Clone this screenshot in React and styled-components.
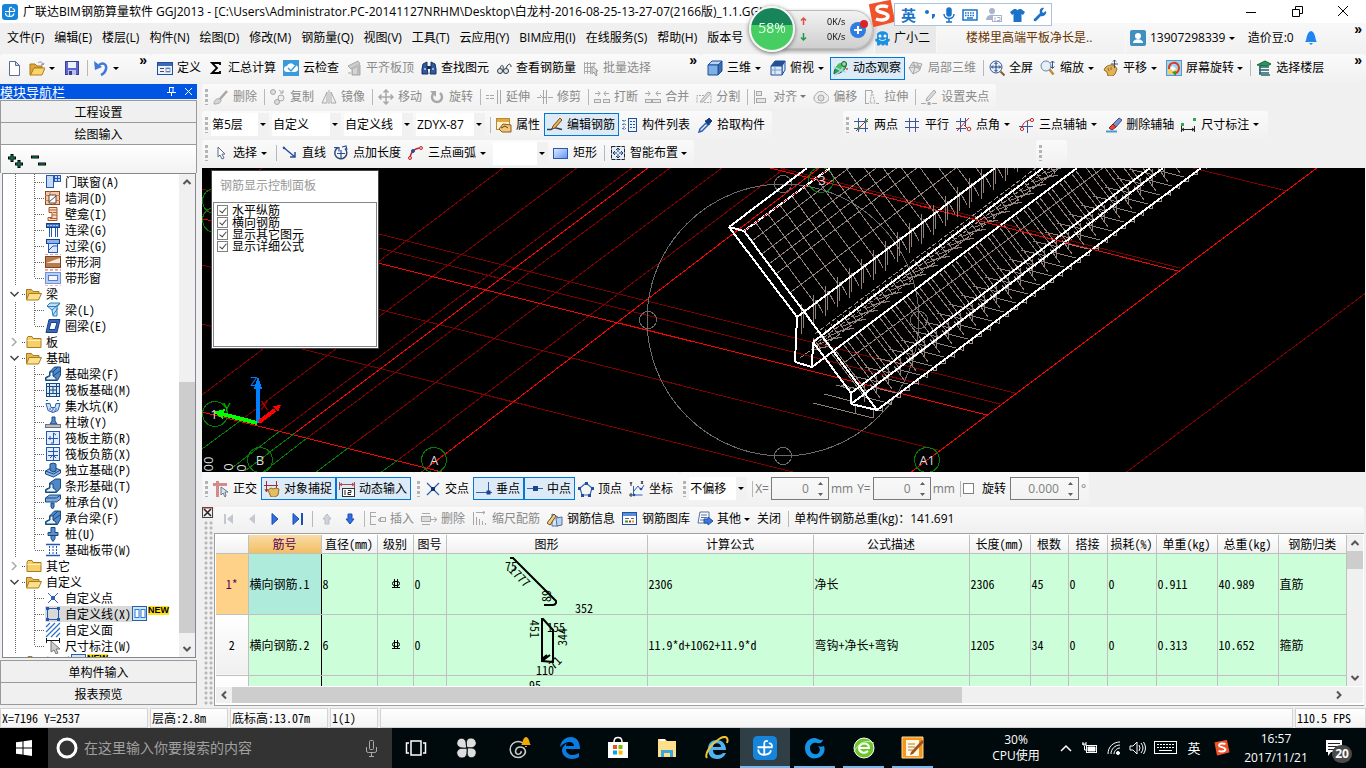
import React from "react";
import styled, { createGlobalStyle, css } from "styled-components";

const UI = `"Open Sans", "Noto Sans CJK SC", sans-serif`;
const SONG = `"Noto Sans CJK SC", sans-serif`;

const Global = createGlobalStyle`
  *, *::before, *::after { box-sizing: border-box; }
  body { margin: 0; background: #f0f0f0; }
  button, input, select { font: inherit; color: inherit; margin: 0; }
  button { background: none; border: 0; padding: 0; }
  svg { display: block; flex: none; }
`;

/* ------------------------------------------------------------------ icons */

const B = "#1f4f9e";
const G = "#a8a8a8";
const R = "#c0282d";

const line = (d, stroke = B, w = 1, extra = {}) => (
  <path d={d} fill="none" stroke={stroke} strokeWidth={w} {...extra} />
);
const area = (d, fill, stroke) => <path d={d} fill={fill} stroke={stroke || "none"} />;
const box = (x, y, w, h, fill = "none", stroke = "none") => (
  <rect x={x} y={y} width={w} height={h} fill={fill} stroke={stroke} />
);
const dot = (cx, cy, r, fill = "none", stroke = "none") => (
  <circle cx={cx} cy={cy} r={r} fill={fill} stroke={stroke} />
);

const ART = {
  newFile: <>{area("M3.5 1.5h6l4 4v10h-10z", "#fff", "#5a6f96")}{area("M9.5 1.5v4h4z", "#c9d6ee", "#5a6f96")}</>,
  open: <>{area("M1 4h5l2 2h5v2H5l-3 7H1z", "#e0a83a", "#a87619")}{area("M5 8h11l-3 7H1.5z", "#fbd46c", "#b27f1c")}{line("M9 3c2-2 5-1 5 2M12 4l2 1 1-2", "#7d8fa8")}</>,
  save: <>{box(1.5, 1.5, 13, 13, "#5b67c9", "#3a3f96")}{box(4, 2, 8, 6, "#eef1fb")}{box(4, 10, 8, 5, "#b9c0ea")}{box(5, 11, 3, 4, "#3a3f96")}</>,
  undo: <>{line("M6 5c4-3 8-1 7 4-.6 3-3 5-5 6", "#3f78d8", 2.5)}{area("M1 1l1 9 7-3z", "#3f78d8")}</>,
  define: <>{box(0.5, 2.5, 15, 12, "#eef3fb", B)}{box(1, 3, 14, 3, "#3c6ab5")}{line("M3 8.500h4M3 11.500h4M9 8.500h4M9 11.500h4", "#3c4c6b")}{box(9, 8, 4, 4, "none", "#7f9ccc")}</>,
  sigma: <path d="M12 5V3H4l5 5-5 5h8v-2" fill="none" stroke="#000" strokeWidth="1.800" />,
  cloud: <>{box(0, 0, 16, 16, "#3a9bdc")}{area("M4 12a3 3 0 0 1 0-6 4 4 0 0 1 7-1 3.500 3.500 0 0 1 1 7z", "#fff")}{line("M5 8l3 3 5-6", "#3a9bdc", 1.5)}</>,
  slabTop: <>{area("M2 6l10-5 2 3-9 5z", "#ccc", G)}{area("M6 8v7h8V5M2 13h3", "#bbb", G)}{line("M8 9v5M10 8v6", "#eee")}</>,
  binocular: <>{area("M2 4l4-2v6l1 6H1v-5zM14 4l-4-2v6l-1 6h6v-5z", "#2e5a9f", "#16305e")}{box(6, 6, 4, 3, "#16305e")}{line("M3 9h2M11 9h2", "#bcd0f0", 1.5)}</>,
  glasses: <>{dot(4, 11, 2.5, "#dfe7ee", "#2b3640")}{dot(10, 11, 2.5, "#dfe7ee", "#2b3640")}{line("M4 8c2-5 4-2 3 2M10 8c3-6 5-4 5-1", "#2b3640")}</>,
  batch: <>{line("M1.500 2v12M4.500 2v12M7.500 2v12M1 3.500h12M1 7.500h9M1 11.500h7M11 2v5", G)}{area("M9 6v8l2-2 2 4 1-1-1-4h2z", "#ddd", "#999")}</>,
  cube: <>{area("M1 5l4-4h10l-4 4z", "#b9d5f3", B)}{area("M11 5l4-4v10l-4 4z", "#3f6da8", B)}{area("M1 5h10v10H1z", "#7fb0e2", B)}</>,
  cubeTop: <>{area("M1 6l4-5h10l-3 5z", "#24508f", B)}{area("M12 6l3-5v9l-3 5z", "#dbe9f8", B)}{area("M1 6h11v9H1z", "#dbe9f8", B)}{line("M5 6v9M1 10h11", "#7fa0cc")}</>,
  orbit: <>{area("M1 14c0-6 4-11 12-11 1 6-4 11-12 11z", "#2fa043", "#12602a")}{dot(8, 7, 4, "#4fbf5e")}{line("M1 15c5-2 8-5 9-8M1 7c5 2 8 5 12 5", "#a9d8f2", 1.5)}{dot(11, 4, 2.5, "#8fd8a0", "#12602a")}{dot(14, 9, 1, "#e04a3a")}</>,
  part3d: <>{area("M1 8l4-6 9 2-3 7-6 3z", "#e3e3e3", G)}{line("M5 2l2 5-2 7M9 3l2 5M1 8l6-1 6 2M3 5l10 2", G)}</>,
  fit: <>{dot(7, 7, 6, "#e7f1fb", "#34568f")}{line("M7 2.500v9M2.500 7h9M5.500 4L7 2.500 8.500 4M5.500 10L7 11.500 8.500 10M4 5.500L2.500 7 4 8.500M10 5.500L11.500 7 10 8.500", "#1b3f80")}{line("M11.500 11.500l4 4", "#8a5a2b", 2)}</>,
  zoom: <>{dot(6, 6, 5, "#e4eff8", "#6c86a4")}{line("M9.500 9.500l4 5", "#c18a3a", 2.5)}{line("M12.500 1v7M10.500 3l2-2 2 2M10.500 6.500l2 2 2-2", "#34568f")}</>,
  pan: <>{area("M2 8c2-3 8-4 10-2l2 3-2 5-2 2H5l-1-4-3-2z", "#e1b25a", "#9b6c1c")}{line("M5 8l1 3M8 7v3", "#9b6c1c")}{line("M11.500 0v8M8 4h7M10 1.500L11.500 0 13 1.500", "#3c4c6b")}</>,
  screenRot: <>{box(0.5, 0.5, 15, 15, "#9fd6ee", "#5b9ac0")}{area("M2 9h9v5H2z", "#f4ce62")}{area("M4 8l3-2 3 3-3 2z", "#fff")}{line("M3 9C2 1 13 1 13 8c0 3-2 5-5 6", "#d93a2c", 2)}{area("M6 12l4-1v5z", "#2f9c3b")}</>,
  floors: <>{area("M1 5l8-4 6 3-4 2z", "#2c9a57", "#136236")}{line("M3 7h10M3 10h10M3 13h10M5 15h9M4 6v9", "#23656d", 1.500)}</>,
  brush: <>{area("M1 15c0-4 3-6 6-5l1 1c0 3-3 4-7 4z", "#d5d5d5", G)}{line("M7 10l7-8", G, 2.5)}</>,
  copy: <>{dot(3, 3, 2.5, "#ddd", G)}{dot(11, 9, 3, "#eee", G)}{dot(7, 13, 2.5, "#ddd", G)}{line("M9 1l4 3M10 4h3V1", G)}</>,
  mirror: <>{area("M6 3v11H1z", "#eee", G)}{area("M10 3v11h5z", "#eee", G)}{line("M8 1v14", G)}</>,
  move: <>{line("M8 1v14M1 8h14M5.500 3.500L8 1l2.500 2.500M5.500 12.500L8 15l2.500-2.500M3.500 5.500L1 8l2.500 2.500M12.500 5.500L15 8l-2.500 2.500", G, 1.500)}</>,
  rotate: <>{line("M5 4a5 5 0 1 0 6 0", G, 2.5)}{area("M1 2h6v6z", G)}</>,
  extend: <>{line("M0 6.500h5M0 9.500h5M5 6.500h4M5 9.500h4", G, 1, { strokeDasharray: "3 1" })}{line("M11.500 1v14M14.500 1v14", G)}</>,
  trim: <>{line("M0 8.500h4M6 8.500h3M11 8.500h5M6.500 1v14M9.500 1v14M3 6l3 3", G)}</>,
  breakIt: <>{line("M1 4.500h5M10 4.500h5M4 2L6 4.500 4 7M12 2l-2 2.500 2 2.500", G)}{box(0.5, 10.5, 6, 3, "#e8e8e8", G)}{box(9.5, 10.5, 6, 3, "#e8e8e8", G)}</>,
  merge: <>{line("M0 4.500h5M11 4.500h5M3 2l2 2.500L3 7M13 2l-2 2.500L13 7", G)}{box(0.5, 10.5, 6, 3, "#e8e8e8", G)}{box(7.5, 10.5, 8, 3, "#e8e8e8", G)}</>,
  split: <>{line("M1 13.500V6.500h9M8 13.500h7V5", G, 1, { strokeDasharray: "2 1" })}{area("M4 13l8-10 3 1-8 9z", "#ddd", G)}</>,
  align: <>{line("M1.500 1v14", G)}{box(3.500, 2.500, 5, 4, "#e5e5e5", G)}{box(3.500, 9.500, 9, 4, "#e5e5e5", G)}</>,
  offset: <>{area("M1 9c0-3 2-3 3-5s7-2 8 0 4 2 4 5-3 5-8 5-7-2-7-5z", "#eee", G)}{dot(8, 9, 3, "#ddd", G)}</>,
  stretch: <>{line("M1.500 1.500H8M1.500 1v13M1 14.500h4", G)}{line("M8 2l3 12H6z", G, 1, { strokeDasharray: "2 1" })}{line("M12 14.500h3", G)}</>,
  grip: <>{line("M0 14.500h5M11 14.500h5", G)}{box(6.500, 13, 3, 3, G)}{area("M6 9l7-8 2 2-7 8-3 1z", "#ddd", G)}</>,
  prop: <>{box(0.5, 1.5, 13, 11, "#fff3cf", "#b08a3e")}{box(1, 2, 12, 3, "#e8a53a")}{area("M3 12l4-5 8 1v7H6z", "#f2c87c", "#8a5a1b")}{line("M5 11l4-2 3 2", "#5a3a10")}</>,
  editBar: <>{line("M0 12.500h4l3-2 8 2", "#2b3c50", 1.500)}{area("M6 9l7-8 2 2-7 8-3 1z", "#e6b35a", "#7c4a16")}</>,
  list: <>{line("M0 3.500h4M0 7.500h4M0 11.500h4M2 3v10", "#5b79ad", 1, { strokeDasharray: "2 1" })}{box(6.500, 1.500, 8, 13, "#eef4fc", B)}{line("M8 4.500h2M8 7.500h2M8 10.500h2M11 4.500h2M11 7.500h2M11 10.500h2", B)}</>,
  pick: <>{line("M2 15l1-3 6-6 2 2-6 6z", "#2b62b8", 1.500)}{area("M8 4l2-1 2-2 3 3-2 2-1 2z", "#16407f", "#16407f")}</>,
  twoPt: <>{line("M0 4.500h14M0 11.500h14M4.500 1v14M11.500 1v14", "#3c55a0")}{line("M2 14L14 2", "#c0282d")}{dot(5, 11, 1.5, "#2a9a36")}{dot(12, 4, 1.5, "#2a9a36")}</>,
  parallel: <>{line("M0 4.500h14M0 10.500h14M4.500 1v14M10.500 1v14", "#3c55a0")}</>,
  ptAngle: <>{line("M0 4.500h10M0 11.500h10M4.500 1v14M9.500 1v8", "#3c55a0")}{line("M1 14L13 1M8 8l4 4", R)}{dot(13, 12, 1.8, "#fff", R)}</>,
  threeAx: <>{line("M0 9.500h14M8.500 4v12", "#3c55a0")}{line("M3 12c0-5 3-9 10-9", R)}{dot(13, 3, 1.6, "#fff", R)}{dot(3, 12, 1.6, "#fff", R)}</>,
  delAx: <>{area("M7 7l6-6 3 2-6 7z", "#7f91c9", "#3d4f8f")}{area("M3 11l4-4 3 3-4 3z", "#e5483e", "#8c1e18")}{line("M0 14.500h11", "#3d9fd0", 2)}</>,
  dim: <>{line("M0.500 9v6M13.500 9v6M1 12.500h12M3 11l-2 1.500L3 14M11 11l2 1.500-2 1.500", "#222")}{box(0, 6, 3, 3, "#2ea94b")}{box(12, 1, 3, 3, "#2ea94b")}</>,
  cursor: <>{area("M5 2v10l2-2 2 4 2-1-2-4h3z", "#fff", "#5a6f86")}</>,
  lineSeg: <>{line("M1 2l12 10M13 7v5H8", "#26509c", 1.500)}{dot(2, 3, 1.2, "#26509c")}</>,
  ptLen: <>{line("M5 2.500a6 6 0 1 0 7 1", "#34496e", 1.500)}{line("M4 8.500h8M8 5v8M1 2.500h5v4M9 2l4-1 1 4", "#26509c", 1.200)}</>,
  arc3: <>{line("M2 14c0-6 4-11 11-11", R, 1.500)}{dot(13, 3, 1.5, "#f2d0d0", R)}{dot(5, 6, 1.5, "#26509c", "#26509c")}{dot(2, 13, 1.5, "#f2d0d0", R)}</>,
  rect: (
    <>
      <defs>
        <linearGradient id="blueFill" x2="1" y2="1">
          <stop stopColor="#e4edff" />
          <stop offset="1" stopColor="#5f92f2" />
        </linearGradient>
      </defs>
      <rect x="0.500" y="3.500" width="14" height="10" fill="url(#blueFill)" stroke="#2c55b5" />
    </>
  ),
  smart: <>{box(1.500, 1.500, 13, 13, "#e8eef6")}<rect x="1.500" y="1.500" width="13" height="13" fill="none" stroke="#222" strokeDasharray="4 1" />{line("M8 3v4M8 9v4M3 8h4M9 8h4M6 5l2-2 2 2M6 11l2 2 2-2M5 6L3 8l2 2M11 6l2 2-2 2", "#1d3f7a")}</>,
  ortho: <>{line("M0 3.500h14M4.500 0v16", "#d48a8a", 3)}{area("M8 6v8l2-2 2 4 1-1-1-4h3z", "#dbe2ea", "#6d7a8c")}</>,
  snap: <>{line("M2.500 0v10M0 4.500h14M12.500 0v7M1 8l1.500 3L4 8", "#9c3030")}{area("M4 9l3-2 2 1 3-1 3 1-1 6-3 2H7z", "#e5bd63", "#946a1e")}</>,
  dyn: <>{line("M0.500 1v8M15.500 1v8M1 3.500h14M3 2L1 3.500 3 5M13 2l2 1.500L13 5", "#b04848")}{box(3.500, 7.500, 12, 8, "#fff", "#333")}{line("M6 9v5M9 9.500h3v2H9v2h3", "#222")}</>,
  cross: <>{line("M2 2l12 12M14 2L2 14", "#2e62b8", 1.300)}{box(6, 6, 4, 4, "#16346e")}</>,
  perp: <>{line("M0 11.500h16M12.500 1v11", "#2e62b8")}{box(10.500, 9.500, 4, 4, "#1d4488")}</>,
  mid: <>{line("M0 7.500h16", "#2e62b8")}{box(6, 5, 5, 5, "#1d4488")}</>,
  vertex: <>{line("M8 2L2 7l2 7h8l2-7z", "#3f66b0", 1.200)}{box(7, 1, 3, 3, B)}{box(0, 6, 3, 3, B)}{box(13, 6, 3, 3, B)}{box(3, 13, 3, 3, B)}{box(10, 13, 3, 3, B)}</>,
  coord: <>{line("M4.500 5v9h9M5 10l4-5 3 4 3-5", "#2e62b8")}{line("M1 1l1 2 1-2M2 3v2M12 0l2 3M14 0l-2 3M1 13h2v2H1z", "#333")}{dot(5, 14, 1.3, B)}{dot(12, 8, 1.3, B)}</>,
  first: <>{box(3, 3, 2, 10, "#c4c8ce")}{area("M12 3v10L6 8z", "#c4c8ce")}</>,
  prev: area("M11 3v10L5 8z", "#c4c8ce"),
  next: area("M5 2.500v11l6-5.500z", "#2f6fe0", "#1d4fb0"),
  last: <>{area("M3 2.500v11l6-5.500z", "#2f6fe0", "#1d4fb0")}{box(11, 2, 2, 12, "#1d4fb0")}</>,
  up: area("M8 3L4 8h2v5h4V8h2z", "#d0d3d8", "#b9bdc4"),
  down: area("M8 13L4 8h2V3h4v5h2z", "#2f6fe0", "#1d4fb0"),
  insert: <>{line("M1 1.500h5M1 5.500h5M1 13.500h5M0.500 1v13M16 9h-8M10 7L8 9l2 2", G)}{box(10.500, 6.500, 5, 4, "#eee", G)}</>,
  delRow: <>{line("M1 2.500h8M1 13.500h8M10 8.500h6M13 6l3 2.500-3 2.500", G)}{box(0.500, 5.500, 9, 5, "#ddd", G)}</>,
  scale: <>{line("M1.500 1v13M4 1.500h9M11 0l2 1.500L11 3M4.500 6v8M7.500 8v6M10.500 10v4M13.500 12v2", G, 1)}</>,
  info: <>{area("M5 3l6 3v9H5z", "#d8e6f7", "#54719f")}{area("M9 7l6-1v8l-5 1z", "#bcd3ee", "#54719f")}{area("M0 12l7-9 2 2-6 9z", "#f2cf83", "#6b4a18")}</>,
  lib: <>{box(0.500, 1.500, 14, 12, "#fff", B)}{box(1, 2, 13, 3, "#5b8fd8")}{line("M3 7.500h4M9 7.500h3", "#667")}{line("M3 10.500h3", "#2a9a36", 2)}{line("M7 10.500h2", R, 2)}{line("M10 10.500h2", "#e0a020", 2)}</>,
  other: <>{area("M3 1h9v11H1z", "#fff", "#54719f")}{line("M4 4h6M4 6.500h6M3 9h5", "#54719f")}{area("M7 8h4V6l5 4-5 4v-2H7z", "#3f78d8", "#1d4fb0")}</>,
  folderOpen: <>{area("M0.500 13V3.500h5l1.500 2h6V8", "#e8b84c", "#a67c22")}{area("M3 7.500h12.500l-3 6.500H0.500z", "#fde08c", "#a67c22")}</>,
  folder: <>{area("M1 4.500l1-2h4l1 2h8v9H1z", "#f6cf68", "#a67c22")}{line("M1.500 6.500h13", "#fff0b8")}</>,
  t_window: <>{box(1.500, 1.500, 7, 12, "#c6d9f7", "#2456b4")}{box(9.500, 1.500, 6, 6, "#c6d9f7", "#2456b4")}{line("M12.500 1v7M9 4.500h7", "#2456b4")}</>,
  t_wallHole: <>{box(0.500, 1.500, 14, 13, "#f2c9ae", "#8c4a22")}{line("M0 5.500h15M0 10.500h15M5 1v4M10 10v4", "#c9794a")}{area("M4 13V5h7v8z", "#fff", "#5a4a3a")}{line("M4 12l7-6", "#5a4a3a")}</>,
  t_niche: <>{area("M4 1.500h8v13H3v-3h4v-5H4z", "#f6dccb", "#a5521f")}{line("M4 4h8M7 9h5M8 6.500h4M5 12.500h7", "#b5622f")}</>,
  t_lintel1: <>{box(1.500, 1.500, 13, 4, "#3f6fc4", "#163f8a")}{line("M4.500 6v9M6.500 6v9M10.500 6v9M12.500 6v9", "#2456b4")}{line("M2 3.500h12", "#a9c6f4", 1, { strokeDasharray: "2 1" })}</>,
  t_lintel2: <>{box(1.500, 1.500, 13, 4, "#8fb0e8", "#163f8a")}{box(3.500, 5.500, 9, 9, "#dbe7fa", "#2456b4")}{line("M4 12l4-4h4", "#2456b4")}</>,
  t_band1: <>{box(0.500, 2.500, 15, 11, "#b87b50", "#7c4420")}{area("M1 9l14-5v5z", "#f8e9dc")}{line("M0 0.500h16M0 15.500h16", "#f09a90", 1, { strokeDasharray: "3 2" })}</>,
  t_band2: <>{box(0.500, 2.500, 15, 11, "#b9cff5", "#6f92d8")}{box(3.500, 5.500, 9, 5, "#f3f7fe", "#5a7cc8")}{line("M0 0.500h16M0 15.500h16", "#f4b4ae", 1, { strokeDasharray: "3 2" })}</>,
  t_beam: <>{area("M2 4l3-3h10l-3 4v9H8l-1-6z", "#bfe0f8", "#2c7fc0")}{line("M2 4.500h9l4-3M7 8l6-5M8 13l5-7", "#2c7fc0")}</>,
  t_ring: <>{area("M4 1.500h11l-3 13H1z", "#3c66b8", "#163f8a")}{area("M6 4.500h6l-2 7H4z", "#fff", "#163f8a")}</>,
  t_fbeam: <>{area("M0.500 14.500v-3l4-2V6l5-5h6v8l-3 5.500z", "#4f87c8", "#134a80")}{area("M1 14v-2l4-2V6h3v4l3 2v2z", "#eaf3fc", "#134a80")}{line("M8 6l5-5M8 10l7-5", "#134a80")}</>,
  t_raft: <>{box(1.500, 1.500, 13, 13, "#dbe9f8", "#134a80")}{line("M4.500 1v14M8 5v6M11.500 1v14M1 4.500h14M5 8h6M1 11.500h14", "#134a80")}</>,
  t_pit: <>{area("M1 5.500h4l1 4h4l1-4h4l-2 7-5 2-5-2z", "#cfe0f6", "#2e62b0")}{line("M1 2.500h3M12 2.500h3M4 11h8M6 13h5", "#2e62b0", 1, { strokeDasharray: "2 1" })}</>,
  t_pier: <>{area("M5 10l2-3V3h3v4l2 3z", "#5a8ed0", "#134a80")}{box(0.500, 10.500, 15, 3, "#b9c0c8", "#6a727c")}</>,
  t_main: <>{box(1.500, 1.500, 13, 13, "#e3edfb", "#2456b4")}{line("M3 8.500h10M8.500 3v10M5 6v4M11 5l-2.500-2M6 13h3", "#2456b4")}</>,
  t_neg: <>{box(1.500, 1.500, 13, 13, "#e3edfb", "#2456b4")}{line("M3 5.500h10M3 9.500h10M8.500 2v12M5 12l3-3 3 3", "#2456b4")}</>,
  t_indep: <>{area("M0.500 9l7-4 8 3v3l-7 4-8-3z", "#8db4e4", "#134a80")}{area("M5 8V2l3-1 3 1v7l-3 1z", "#4f87c8", "#134a80")}{line("M0.500 9l8 3 7-4", "#134a80")}</>,
  t_strip: <>{area("M0.500 14.500v-3l4-2V5l6-4h5v9l-4 4.500z", "#4f87c8", "#134a80")}{area("M1 14v-2l4-2V6h3v4l3 2v2z", "#eaf3fc", "#134a80")}</>,
  t_cap: <>{area("M0.500 4l4-3h11v4l-4 3h-11z", "#7fa9de", "#134a80")}{area("M6 9h3v4l-1.500 2L6 13z", "#4f87c8", "#134a80")}{line("M0.500 4h11l4-3", "#134a80")}</>,
  t_pile: <>{area("M6 1.500h4v5h3v3H3v-3h3zM6 9.500h4v3l-2 3-2-3z", "#5a8ed0", "#134a80")}</>,
  t_slabBand: <>{line("M1 2.500h14M1 13.500h14", "#2456b4", 1.500)}{line("M4.500 4v8M8 4v8M11.500 4v8", "#2456b4", 1, { strokeDasharray: "2 1" })}</>,
  t_point: <>{line("M3 3l10 10M13 3L3 13", "#2e62b8")}{box(6, 6, 4, 4, "#2e62b8")}</>,
  t_line: <>{box(2.500, 2.500, 11, 11, "none", "#2456b4")}{[1, 12].map((x) => [1, 12].map((y) => <rect key={`${x}${y}`} x={x} y={y} width="3" height="3" fill="#2456b4" />))}</>,
  t_face: <>{line("M1 5l4-4M1 10L10 1M1 15L15 1M6 15l9-9M11 15l4-4", "#2e6fc8", 1.200)}</>,
  t_dim: <>{line("M1.500 0v5M14.500 0v5M2 2.500h12", "#111")}{area("M6 3v11l3-2 2 4 2-1-2-4h4z", "#ccc", "#777")}</>,
  beanNew: <>{box(0.500, 0.500, 14, 14, "#cfe6fb", "#2a5ea8")}{box(3, 3.500, 4, 8, "#fff", "#2a7fd8")}{box(9, 3.500, 4, 8, "#fff", "#2a7fd8")}</>,
};

const Icon = ({ name, size = 16 }) => (
  <svg width={size} height={size} viewBox="0 0 16 16" aria-hidden="true">{ART[name]}</svg>
);

const AppMark = ({ size = 16 }) => (
  <svg width={size} height={size} viewBox="0 0 16 16" aria-hidden="true">
    <rect width="16" height="16" rx="3" fill="#1585dc" />
    <path d="M3 7.500h9.500c.5-1.500-.5-3-2-2.500M7.500 12.500V5c0-1.500 1-2 2.500-1.500M3.500 9c0 2.500 2 3.500 4 3.500 2.500 0 4-1 4.500-3" fill="none" stroke="#fff" strokeWidth="1.200" />
  </svg>
);

const SogouMark = ({ size }) => (
  <svg width={size} height={size} viewBox="0 0 28 28" aria-hidden="true">
    <path d="M2 5L22 1l4 20-20 5z" fill="#f0522a" stroke="#f0522a" strokeWidth="2" strokeLinejoin="round" />
    <path d="M20 7c-5-2-12-1-11 3 1 3 10 2 11 6 0 4-7 5-12 3" fill="none" stroke="#fff" strokeWidth="3.500" />
  </svg>
);

/* ------------------------------------------------------------------ shell */

const Shell = styled.div`
  display: flex;
  flex-direction: column;
  height: 100vh;
  min-width: 1100px;
  overflow: hidden;
  background: #f0f0f0;
  color: #000;
  font: 12px/16px ${UI};
  white-space: nowrap;
`;

const TitleBar = styled.header`
  display: flex;
  align-items: center;
  gap: 5px;
  flex: none;
  height: 23px;
  padding-left: 2px;
  background: #fff;
`;

const WindowButtons = styled.div`
  display: flex;
  margin-left: auto;
`;

const WindowButton = styled.button`
  display: grid;
  place-items: center;
  width: 46px;
  height: 22px;
`;

const MenuBar = styled.nav`
  display: flex;
  align-items: stretch;
  flex: none;
  height: 31px;
  padding: 0 0 1px 2px;
`;

const MenuItem = styled.button`
  padding: 0 5px;
`;

const Account = styled.div`
  display: flex;
  flex: none;
  width: 492px;
  margin-left: auto;
`;

const AccountCell = styled.div`
  display: flex;
  align-items: center;
  gap: 4px;
  flex: ${(p) => (p.$width ? `0 0 ${p.$width}px` : "1")};
  padding-left: ${(p) => p.$pad || 0}px;
  color: ${(p) => p.$color || "inherit"};
  background: ${(p) => (p.$plain ? "#e9e9e9" : "linear-gradient(#f8f8f8, #f1f1f1)")};
  border-left: 1px solid #f8f8f8;
`;

const More = styled.span`
  margin-left: auto;
  padding: 0 4px;
  align-self: flex-start;
  font: bold 14px/13px "Liberation Sans", sans-serif;
`;

/* --------------------------------------------------------------- toolbars */

const Row = styled.div`
  display: flex;
  flex: none;
  height: ${(p) => p.$height || 29}px;
  padding-bottom: 2px;
`;

const Group = styled.div`
  display: flex;
  align-items: center;
  flex: ${(p) => (p.$grow ? "1" : p.$width ? `0 0 ${p.$width}px` : "none")};
  margin-left: ${(p) => p.$gap || 0}px;
  padding: 0 ${(p) => (p.$grow || p.$width ? 0 : 3)}px 0 3px;
  border-radius: 3px;
  background: linear-gradient(#fafafa, #f1f1f1);
`;

const Grip = styled.span`
  align-self: center;
  width: 3px;
  height: 16px;
  margin-right: 2px;
  background: repeating-linear-gradient(#b4b4b4 0 3px, transparent 3px 5px);
`;

const Separator = styled.span`
  width: 1px;
  height: 16px;
  margin: 0 2px 0 3px;
  background: #b8b8b8;
`;

const ToolButton = styled.button`
  display: flex;
  align-items: center;
  flex: none;
  gap: 4px;
  height: 23px;
  padding: 0 3px 0 2px;
  border: 1px solid transparent;
  color: ${(p) => (p.disabled ? "#8a8a8a" : "#000")};
  ${(p) => p.$active && css`
    background: #dcebf7;
    border-color: #0078d7;
  `}
`;

const Caret = styled.span`
  width: 0;
  height: 0;
  margin: 0 ${(p) => (p.$tight ? 0 : 2)}px 0 ${(p) => (p.$tight ? 0 : 1)}px;
  margin-left: ${(p) => (p.$tight ? -1 : 0)}px;
  border: 3px solid transparent;
  border-top-color: ${(p) => (p.$dim ? "#777" : "#000")};
  border-bottom-width: 0;
`;

const Tool = ({ icon, label, disabled, active, arrow }) => (
  <ToolButton type="button" disabled={disabled} $active={active}>
    {icon && <Icon name={icon} />}
    {label}
    {arrow && <Caret $tight={arrow === "tight"} $dim={disabled} />}
  </ToolButton>
);

const Tools = ({ items }) =>
  items.map((item, i) => (item === "|" ? <Separator key={i} /> : <Tool key={i} {...item} />));

const t = (icon, label, arrow) => ({ icon, label, arrow });
const off = (icon, label, arrow) => ({ icon, label, arrow, disabled: true });
const on = (icon, label) => ({ icon, label, active: true });

const SelectFrame = styled.label`
  position: relative;
  display: block;
  width: ${(p) => p.$width}px;
  height: 23px;
  margin: 0 2px 0 1px;
  background: linear-gradient(90deg, #fff calc(100% - 11px), #f1f1f1 calc(100% - 11px));
  &::after {
    content: "";
    position: absolute;
    right: 3px;
    top: 10px;
    border: 3px solid transparent;
    border-top-color: #000;
    border-bottom-width: 0;
  }
`;

const Select = styled.select`
  appearance: none;
  width: 100%;
  height: 100%;
  padding: 0 1px;
  border: 0;
  background: transparent;
`;

const Combo = ({ value, width, name }) => (
  <SelectFrame $width={width}>
    <Select aria-label={name} defaultValue={value}>
      <option>{value}</option>
    </Select>
  </SelectFrame>
);

const SpinFrame = styled.span`
  display: flex;
  align-items: center;
  width: ${(p) => p.$width}px;
  height: 23px;
  margin: 0 2px;
  padding-right: 4px;
  border: 1px solid #7a7a7a;
`;

const SpinInput = styled.input`
  flex: 1;
  min-width: 0;
  padding: 0 8px 0 0;
  border: 0;
  background: transparent;
  color: #808080;
  text-align: right;
  outline: 0;
`;

const Spin = ({ value, width, name }) => (
  <SpinFrame $width={width}>
    <SpinInput aria-label={name} defaultValue={value} />
    <svg width="7" height="15" viewBox="0 0 7 15" fill="#606060" aria-hidden="true">
      <path d="M1 4l2.500-3L6 4zM1 12l2.500 3L6 12z" />
    </svg>
  </SpinFrame>
);

const Unit = styled.span`
  color: ${(p) => (p.$dark ? "#000" : "#7a7a7a")};
  margin-right: ${(p) => p.$after || 0}px;
`;

const Tick = styled.input`
  appearance: none;
  position: relative;
  flex: none;
  width: 11px;
  height: 11px;
  margin: 0 8px 0 0;
  border: 1px solid #808080;
  background: #fff;
  &:checked::after {
    content: "";
    position: absolute;
    left: 3px;
    top: 0;
    width: 4px;
    height: 7px;
    border: solid #444;
    border-width: 0 1px 1px 0;
    transform: rotate(40deg);
  }
`;

const TickLabel = styled.label`
  display: flex;
  align-items: center;
`;

/* ---------------------------------------------------------------- sidebar */

const Body = styled.div`
  display: flex;
  flex: 1;
  min-height: 0;
  gap: 5px;
`;

const Sidebar = styled.aside`
  display: flex;
  flex-direction: column;
  flex: 0 0 197px;
  padding-bottom: 3px;
  font: 12px/16px ${SONG};
  font-feature-settings: "hwid";
`;

const SidebarTitle = styled.h2`
  display: flex;
  align-items: center;
  flex: none;
  gap: 8px;
  height: 15px;
  margin: 0 0 1px;
  padding-right: 4px;
  background: #0054e3;
  color: #fff;
  font: 13px/15px ${SONG};
  & > span { flex: 1; }
`;

const SidebarTab = styled.button`
  flex: none;
  height: ${(p) => (p.$last ? 23 : 22)}px;
  border: 1px solid #9a9a9a;
  border-bottom-width: ${(p) => (p.$last ? 1 : 0)}px;
  background: #f0f0f0;
`;

const TreeTools = styled.div`
  display: flex;
  align-items: center;
  flex: none;
  gap: 6px;
  height: 28px;
  padding: 3px 0 0 6px;
  background: linear-gradient(#fff, #f2f2f2);
  border: solid #9a9a9a;
  border-width: 0 1px;
`;

const TreeFrame = styled.div`
  display: flex;
  flex: 1;
  min-height: 0;
  margin: 0 1px 2px 2px;
  border: 1px solid #828790;
  background: #fff;
`;

const TreeList = styled.ul`
  flex: 1;
  min-width: 0;
  margin: 0;
  padding: 0;
  overflow: hidden;
  list-style: none;
`;

const TreeItem = styled.li`
  display: flex;
  align-items: center;
  height: 16px;
`;

const TreeLabel = styled.span`
  display: flex;
  align-items: center;
  height: 16px;
  gap: 4px;
  padding-right: 1px;
  background: ${(p) => (p.$selected ? "#d9d9d9" : "transparent")};
`;

const NewTag = styled.b`
  align-self: flex-start;
  padding: 0;
  background: #ffe11f;
  font: bold 9px/9px "Liberation Sans", sans-serif;
`;

const ScrollBar = styled.div`
  display: flex;
  flex-direction: ${(p) => (p.$horizontal ? "row" : "column")};
  align-items: center;
  flex: none;
  width: ${(p) => (p.$horizontal ? "auto" : "16px")};
  height: ${(p) => (p.$horizontal ? "16px" : "auto")};
  padding-right: ${(p) => (p.$horizontal ? 16 : 0)}px;
  background: #f0f0f0;
`;

const Arrow = styled.svg`
  width: 16px;
  height: 16px;
  transform: rotate(${(p) => p.$turn}deg);
`;

const ScrollArrow = ({ turn }) => (
  <Arrow $turn={turn} viewBox="0 0 16 16" aria-hidden="true">
    <path d="M4.500 10L8 6.500l3.500 3.500" fill="none" stroke="#555" strokeWidth="2" />
  </Arrow>
);

const Thumb = styled.div`
  align-self: stretch;
  flex: ${(p) => p.$size};
  background: #cdcdcd;
`;

const Track = styled.div`
  flex: ${(p) => p.$size};
`;

const TREE = [
  ["t_window", "门联窗(A)"], ["t_wallHole", "墙洞(D)"], ["t_niche", "壁龛(I)"], ["t_lintel1", "连梁(G)"],
  ["t_lintel2", "过梁(G)"], ["t_band1", "带形洞"], ["t_band2", "带形窗", "end"],
  ["open", "梁"], ["t_beam", "梁(L)"], ["t_ring", "圈梁(E)", "end"],
  ["shut", "板"], ["open", "基础"],
  ["t_fbeam", "基础梁(F)"], ["t_raft", "筏板基础(M)"], ["t_pit", "集水坑(K)"], ["t_pier", "柱墩(Y)"],
  ["t_main", "筏板主筋(R)"], ["t_neg", "筏板负筋(X)"], ["t_indep", "独立基础(P)"], ["t_strip", "条形基础(T)"],
  ["t_cap", "桩承台(V)"], ["t_fbeam", "承台梁(F)"], ["t_pile", "桩(U)"], ["t_slabBand", "基础板带(W)", "end"],
  ["shut", "其它"], ["open", "自定义"],
  ["t_point", "自定义点"], ["t_line", "自定义线(X)", "selected"], ["t_face", "自定义面"], ["t_dim", "尺寸标注(W)", "end"],
  ["shut", "识别", "new"],
];

const Guides = ({ kind, last }) => {
  if (kind === "open" || kind === "shut") {
    return (
      <svg width="23" height="16" viewBox="0 0 23 16" fill="none" aria-hidden="true">
        <path d="M19 8.500h4" stroke="#555" strokeDasharray="1 1" />
        <path d={kind === "open" ? "M7.500 6l4 4 4-4" : "M9 4l4 4-4 4"} stroke={kind === "open" ? "#444" : "#aaa"} strokeWidth="1.500" />
      </svg>
    );
  }
  return (
    <svg width="42" height="16" viewBox="0 0 42 16" fill="none" stroke="#666" strokeDasharray="1 1" shapeRendering="crispEdges" aria-hidden="true">
      <path d={`M12.500 0v16M31.500 0v${last ? 8 : 16}M32 8.500h10`} />
    </svg>
  );
};

const Tree = () => (
  <TreeList>
    {TREE.map(([kind, label, flag]) => {
      const branch = kind === "open" || kind === "shut";
      return (
        <TreeItem key={label}>
          <Guides kind={kind} last={flag === "end"} />
          <TreeLabel $selected={flag === "selected"}>
            <Icon name={branch ? (kind === "open" ? "folderOpen" : "folder") : kind} />
            {label}
          </TreeLabel>
          {(flag === "selected" || flag === "new") && (
            <>
              <Icon name="beanNew" />
              <NewTag>NEW</NewTag>
            </>
          )}
        </TreeItem>
      );
    })}
  </TreeList>
);

/* ------------------------------------------------------------------ scene */

const Stage = styled.section`
  position: relative;
  flex: 1;
  min-height: 0;
  margin-right: 1px;
  overflow: hidden;
  background: #000;
`;

const SceneSvg = styled.svg`
  width: 100%;
  height: 100%;
`;

const seg = (list) => list.map(([a, b, c, d]) => `M${a} ${b}L${c} ${d}`).join("");
const steps = (n, fn) => Array.from({ length: n }, (_, k) => fn(k));

const DARK = seg([
  [503, 168, 202, 395], [577, 168, 240, 421], [632, 168, 280, 431], [670, 168, 307, 438], [722, 168, 348, 448],
  [785, 168, 398, 460], [1125, 473, 1366, 293], [379, 234, 1015, 393], [379, 248, 1000, 404], [202, 265, 938, 450],
  [202, 324, 797, 473], [780, 168, 1180, 268], [1193, 168, 1287, 191], [202, 189, 214, 192], [202, 215, 262, 168],
]);
const BRIGHT = seg([
  [202, 412, 446, 473], [370, 261, 987, 415], [648, 168, 295, 433], [819, 168, 423, 471], [910, 473, 1317, 168],
  [770, 168, 1178, 271], [202, 219, 214, 221],
]);
const GREEN = seg([
  [240, 421, 202, 449], [280, 431, 228, 471], [295, 433, 245, 471], [307, 438, 262, 473], [348, 448, 315, 473],
  [398, 460, 380, 473], [423, 471, 420, 473],
]);
const HULL = seg([
  [729, 227, 807, 168], [744, 231, 830, 168], [729, 227, 744, 231], [729, 227, 797, 317], [744, 231, 877, 410],
  [797, 317, 795, 362], [795, 362, 812, 367], [812, 367, 813, 342], [813, 342, 851, 393], [851, 393, 851, 404],
  [851, 404, 877, 410], [797, 317, 995, 168], [813, 342, 1043, 168], [812, 367, 1077, 168], [851, 393, 1150, 168],
  [851, 404, 1163, 168], [877, 410, 1201, 168],
]);

/* Rebar mesh: every bar repeats along the stair direction, 12 across and 9 up. */
const SLAB = seg([
  ...steps(26, (k) => [756 + 12 * k, 223 - 9 * k, 814 + 12 * k, 302 - 9 * k]),
  ...[[762, 254], [776, 274], [791, 292]].map(([x, y]) => [x, y, x + 210, y - 158]),
  ...[[752, 241], [769, 264]].map(([x, y]) => [x, y, x + 150, y - 113]),
]);
const LANDING = seg([
  ...steps(26, (k) => [832 + 12 * k, 354 - 9 * k, 864 + 12 * k, 396 - 9 * k]),
  ...steps(26, (k) => [836 + 12 * k, 351 - 9 * k, 868 + 12 * k, 393 - 9 * k]),
  [840, 366, 1120, 155],
]);
const BEAM = seg([
  ...steps(24, (k) => [801 + 12 * k, 304 - 9 * k, 801 + 12 * k, 334 - 9 * k]),
  ...steps(24, (k) => [804 + 12 * k, 309 - 9 * k, 811 + 12 * k, 322 - 9 * k]),
  ...steps(24, (k) => [804 + 12 * k, 309 - 9 * k, 803 + 12 * k, 328 - 9 * k]),
  ...steps(46, (k) => [813 + 6 * k, 338 - 4.5 * k, 821 + 6 * k, 349 - 4.5 * k]),
  ...steps(24, (k) => [817 + 12 * k, 345 - 9 * k, 836 + 12 * k, 337 - 9 * k]),
  ...steps(24, (k) => [812 + 12 * k, 350 - 9 * k, 830 + 12 * k, 346 - 9 * k]),
]);
const FOOT = seg([
  ...steps(32, (k) => [841 + 12 * k, 385 - 9 * k, 866 + 12 * k, 391 - 9 * k]),
  ...steps(32, (k) => [860 + 12 * k, 396 - 9 * k, 884 + 12 * k, 402 - 9 * k]),
  ...steps(32, (k) => [864 + 12 * k, 385 - 9 * k, 864 + 12 * k, 402 - 9 * k]),
  ...steps(32, (k) => [870 + 12 * k, 384 - 9 * k, 880 + 12 * k, 398 - 9 * k]),
  [813, 403, 873, 418], [824, 394, 855, 402], [836, 385, 851, 389], [873, 410, 873, 418], [855, 404, 855, 414],
]);
const TEETH = steps(38, (k) => `M${877 + 9 * k} ${410 - 6.75 * k}l5 1v-5`).join("");
const CORE = seg([[818, 342, 1050, 168], [825, 345, 1060, 168], [815, 334, 1036, 168], [800, 358, 830, 336]]);
const BUBBLES = [[215, 414], [260, 460], [434, 460], [927, 460], [821, 180], [215, 201], [215, 220]];
const HANDLES = [[648, 320], [783, 456], [783, 184], [919, 320]];

const Scene = () => (
  <SceneSvg viewBox="202 168 1163 304" preserveAspectRatio="xMinYMin slice" fill="none" shapeRendering="crispEdges" role="img" aria-label="三维视图">
    <path d={DARK} stroke="#800000" />
    <path d={BRIGHT} stroke="#ff0000" />
    <path d={GREEN} stroke="#008000" />
    <g stroke="#008000">{BUBBLES.map(([x, y]) => <circle key={`${x}-${y}`} cx={x} cy={y} r="12.500" />)}</g>
    <circle cx="783" cy="320" r="136" stroke="#6c6c6c" />
    <g stroke="#6c6c6c">{HANDLES.map(([x, y]) => <circle key={`${x}-${y}`} cx={x} cy={y} r="8.500" />)}</g>
    <path d={SLAB + LANDING} stroke="#8f8079" />
    <path d={BEAM + FOOT} stroke="#8f8079" />
    <path d={TEETH} stroke="#9d8f88" />
    <path d={CORE} stroke="#9d8f88" strokeDasharray="5 2" />
    <path d={HULL} stroke="#fff" strokeWidth="2" />
    <path d="M744 231L830 168M890 198L1178 271" stroke="#d01010" strokeDasharray="7 5" />
    <path d="M258 423V388" stroke="#0080ff" strokeWidth="4" />
    <path d="M258 376l-4 13h8z" fill="#0080ff" />
    <path d="M257 423l-35-9" stroke="#00ff00" strokeWidth="4" />
    <path d="M213 412l12-3-2 10z" fill="#00ff00" />
    <path d="M259 422l16-12" stroke="#ff0000" strokeWidth="4" />
    <path d="M281 405l-9 1 6 6z" fill="#ff0000" />
    <g fontFamily={UI} fontSize="13" fill="#dcdcdc" textAnchor="middle" shapeRendering="auto">
      <text x="260" y="465">B</text>
      <text x="434" y="465">A</text>
      <text x="927" y="465">A1</text>
      <text x="822" y="185">3</text>
      <text x="214" y="419">1</text>
      <text x="254" y="386" fill="#0080ff">Z</text>
      <text x="264" y="410" fill="#c00000">X</text>
      <text x="227" y="412" fill="#00c000">Y</text>
      <text transform="translate(213 464) rotate(-90)">00</text>
      <text transform="translate(233 467) rotate(-90)">0</text>
      <text transform="translate(246 468) rotate(-90)">0</text>
    </g>
  </SceneSvg>
);

const DisplayPanel = styled.fieldset`
  position: absolute;
  left: 9px;
  top: 2px;
  display: flex;
  flex-direction: column;
  width: 168px;
  height: 179px;
  margin: 0;
  padding: 0 1px 1px;
  border: 1px solid #444;
  background: #fff;
`;

const PanelCaption = styled.div`
  padding: 7px 7px 8px;
  color: #999;
`;

const PanelList = styled.div`
  flex: 1;
  padding: 1px 3px;
  border: 1px solid #828790;
  font: 12px/12px ${SONG};
`;

const PanelTick = styled(TickLabel)`
  height: 12px;
  gap: 4px;
  & > input { margin: 0; }
`;

/* ------------------------------------------------------------------- grid */

const Dock = styled.section`
  display: flex;
  flex: none;
  gap: 1px;
  margin-right: 2px;
`;

const DockHandle = styled.div`
  display: flex;
  flex-direction: column;
  gap: 3px;
  flex: 0 0 11px;
  &::after {
    content: "";
    flex: 1;
    margin-left: 2px;
    background: radial-gradient(circle at 2px 2px, #b8b8b8 1px, transparent 2px) 0 0 / 5px 5px;
  }
`;

const DockContent = styled.div`
  display: flex;
  flex-direction: column;
  flex: 1;
  min-width: 0;
`;

const NavButton = styled.button`
  display: grid;
  place-items: center;
  width: 23px;
  height: 23px;
`;

const GridFrame = styled.div`
  border: solid #a0a0a0;
  border-width: 1px 0 1px 1px;
  padding: 1px 1px 2px 1px;
  background: #fff;
`;

const GridView = styled.div`
  display: flex;
  height: 151px;
  margin-bottom: 1px;
  overflow: hidden;
`;

const Sheet = styled.table`
  flex: 1;
  width: 100%;
  height: max-content;
  table-layout: fixed;
  border-collapse: collapse;
  font: 12px/16px ${SONG};
  font-feature-settings: "hwid";
`;

const HeadCell = styled.th`
  height: 18px;
  padding: 0;
  border: solid #c0c0c0;
  border-width: 0 1px 1px 0;
  background: ${(p) => (p.$current ? "linear-gradient(#f9dca8, #f2bf62)" : "linear-gradient(#fff, #f0f0f0)")};
  color: ${(p) => (p.$current ? "#5a0057" : "#000")};
  font-weight: normal;
`;

const RowHead = styled(HeadCell)`
  background: ${(p) => (p.$current ? "#ffd28a" : "linear-gradient(#fff, #efefef)")};
`;

const Cell = styled.td`
  height: 61px;
  padding: ${(p) => (p.$drawing ? "0" : "0 0 0 1px")};
  overflow: hidden;
  border: solid #c0c0c0;
  border-width: 0 1px 1px 0;
  background: ${(p) => (p.$current ? "#aeebdb" : "#ccffd9")};
  ${(p) => p.$frozen && "border-right-color: #000;"}
`;

const Grade = () => (
  <svg width="12" height="12" viewBox="0 0 12 12" fill="none" stroke="#000" role="img" aria-label="HRB400">
    <rect x="2.500" y="3.500" width="7" height="4" rx="2" />
    <path d="M4.500 1v9M7.500 1v9M2 9.500h8" />
  </svg>
);

const GradeWrap = styled.div`
  display: flex;
  justify-content: center;
`;

const SHAPES = [
  <>
    <path d="M63 4h3l43 43v2q-1 2-3 2H97" stroke="#000" strokeWidth="2" fill="none" />
    <text x="58" y="17">75</text>
    <text transform="translate(61 17) rotate(45)">1777</text>
    <text transform="translate(104 48) rotate(-90)">89</text>
    <text x="128" y="59">352</text>
  </>,
  <>
    <path d="M96 4l10 11v32l-11-1V4zM95 46l8-6M95 44l5-4" stroke="#000" strokeWidth="2" fill="none" />
    <text transform="translate(83 5) rotate(90)">451</text>
    <text x="100" y="17">155</text>
    <text transform="translate(120 31) rotate(-90)">344</text>
    <text transform="translate(107 55) rotate(-45)">71</text>
    <text x="89" y="60">110</text>
  </>,
  <text x="82" y="14">95</text>,
];

const COLUMNS = [
  ["", 32], ["筋号", 73], ["直径(mm)", 56], ["级别", 36], ["图号", 33], ["图形", 201], ["计算公式", 166],
  ["公式描述", 156], ["长度(mm)", 61], ["根数", 38], ["搭接", 39], ["损耗(%)", 49], ["单重(kg)", 61],
  ["总重(kg)", 61], ["钢筋归类", 0],
];

const RECORDS = [
  ["1*", "横向钢筋.1", "8", "grade", "0", "shape", "2306", "净长", "2306", "45", "0", "0", "0.911", "40.989", "直筋"],
  ["2", "横向钢筋.2", "6", "grade", "0", "shape", "11.9*d+1062+11.9*d", "弯钩+净长+弯钩", "1205", "34", "0", "0", "0.313", "10.652", "箍筋"],
  ["", "", "", "", "", "shape", "", "", "", "", "", "", "", "", ""],
];

const cellBody = (value, row) => {
  if (value === "grade") return <GradeWrap><Grade /></GradeWrap>;
  if (value === "shape") {
    return (
      <svg width="200" height="60" viewBox="0 0 200 60" fontSize="12" fontFamily={SONG}>{SHAPES[row]}</svg>
    );
  }
  return value;
};

const RebarTable = () => (
  <Sheet>
    <colgroup>
      {COLUMNS.map(([name, width]) => <col key={name} width={width || undefined} />)}
    </colgroup>
    <thead>
      <tr>{COLUMNS.map(([name]) => <HeadCell key={name} scope="col" $current={name === "筋号"}>{name}</HeadCell>)}</tr>
    </thead>
    <tbody>
      {RECORDS.map(([head, ...cells], row) => (
        <tr key={row}>
          <RowHead scope="row" $current={row === 0}>{head}</RowHead>
          {cells.map((value, i) => (
            <Cell key={i} $current={row === 0 && i === 0} $frozen={i === 0} $drawing={value === "shape"}>
              {cellBody(value, row)}
            </Cell>
          ))}
        </tr>
      ))}
    </tbody>
  </Sheet>
);

/* ----------------------------------------------------- status and taskbar */

const StatusBar = styled.footer`
  display: flex;
  flex: none;
  gap: 2px;
  height: 20px;
  font: 12px/16px ${SONG};
  font-feature-settings: "hwid";
`;

const StatusCell = styled.div`
  flex: ${(p) => (p.$width ? `0 0 ${p.$width}px` : "1")};
  padding: 1px;
  border: 1px solid #d4d4d4;
  background: linear-gradient(#fff, #f3f3f3);
`;

const TaskBar = styled.div`
  display: flex;
  flex: none;
  height: 40px;
  background: #00090c;
  color: #fff;
`;

const StartButton = styled.button`
  display: grid;
  place-items: center;
  width: 48px;
  background: #000;
`;

const SearchBox = styled.label`
  display: flex;
  align-items: center;
  gap: 6px;
  width: 344px;
  padding: 0 14px 0 8px;
  background: #333;
`;

const SearchInput = styled.input`
  flex: 1;
  min-width: 0;
  padding: 0;
  border: 0;
  outline: 0;
  background: transparent;
  font-size: 14px;
  &::placeholder { color: #a0a0a0; opacity: 1; }
`;

const TaskButton = styled.button`
  display: grid;
  place-items: center;
  position: relative;
  width: ${(p) => p.$width || 49}px;
  ${(p) => p.$front && "background: #2f3f45;"}
  ${(p) => p.$running && css`
    &::after {
      content: "";
      position: absolute;
      left: ${p.$front ? 0 : 4}px;
      right: ${p.$front ? 0 : 4}px;
      bottom: 0;
      height: 2px;
      background: #76b9ed;
    }
  `}
`;

const Tray = styled.div`
  display: flex;
  align-items: center;
  margin-left: auto;
`;

const TrayItem = styled.div`
  display: grid;
  place-items: center;
  width: ${(p) => p.$width}px;
  font-size: ${(p) => (p.$large ? 13 : 12)}px;
  line-height: ${(p) => (p.$tall ? 19 : 16)}px;
  text-align: center;
`;

const NoticeCount = styled.span`
  position: absolute;
  left: 6px;
  top: 6px;
  width: 20px;
  border-radius: 10px;
  background: #4a4a4a;
  font: bold 12px/18px ${UI};
`;

const NoticeIcon = styled.span`
  position: relative;
  margin-right: 12px;
`;

const TASKS = [
  { key: "view", width: 48, art: <g fill="none" stroke="#fff" strokeWidth="1.500"><rect x="7" y="5" width="10" height="14" /><path d="M5 7H2.500v10H5M19 7h2.500v10H19" /></g> },
  { key: "wheel", width: 54, art: <g fill="#dedede" stroke="#00090c" strokeWidth="0.800"><path d="M12 12C5 13 1 10 2 6s6-5 8-2 1 5 2 8zM12 12c-2-6 0-10 4-10s7 5 4 8-6 1-8 2zM12 12c7-1 10 2 9 6s-6 5-8 2 0-5-1-8zM12 12c1 6-1 10-5 10s-7-5-4-8 6-1 9-2z" /></g> },
  { key: "swirl", width: 50, art: <><path d="M17 8A8 8 0 1 0 17 19c3-3 1-8-4-8-4 0-6 5-3 7 2 1 5-1 4-3" fill="none" stroke="#ccc" strokeWidth="1.500" /><path d="M14 9c2-1 1-7 5-8 4 1 3 7 5 8zM18 10h2v1h-2z" fill="#f2a900" /></> },
  { key: "edge", width: 52, art: <path d="M2 11C3 4 8 1 13 1c6 0 9 5 9 12H8c0 4 3 6 7 6 2 0 4-1 6-2v4c-6 4-16 2-17-6 0-4 3-7 6-8-2 1-2 2-2 3h8c0-5-8-6-14 1z" fill="#0a7be0" /> },
  { key: "store", width: 44, art: <><path d="M8 6c0-6 8-6 8 0" fill="none" stroke="#fff" strokeWidth="1.500" /><path d="M2 6h20v16H2z" fill="#fff" /><path d="M7 9h4v4H7z" fill="#f25022" /><path d="M12.500 9h4v4h-4z" fill="#7fba00" /><path d="M7 14.500h4v4H7z" fill="#00a4ef" /><path d="M12.500 14.500h4v4h-4z" fill="#ffb900" /></> },
  { key: "files", width: 54, art: <><path d="M3 3h7l2 2h9v16H3z" fill="#ffe08a" /><path d="M5 3h5v2H5z" fill="#fff" /><path d="M6 21v-7h12v7h-3v-4H9v4z" fill="#37a8e0" /></> },
  { key: "ie", width: 46, art: <><path d="M3 13C3 7 7 4 12 4s9 4 9 10H8c0 3 2 5 5 5 2 0 4-1 5-2h3c-2 4-5 6-9 6-6 0-9-4-9-10zm5-2h8c0-5-8-5-8 0z" fill="#4fb3f2" /><path d="M2 22c-3-4 4-14 12-19 6-4 10-2 8 4" fill="none" stroke="#f3c430" strokeWidth="2" /></> },
  { key: "ggj", width: 50, running: true, front: true },
  { key: "g", running: true, art: <path d="M20 3c-1 2-3 1-5 0C9 0 2 5 2 12s6 12 12 10c6-1 9-7 7-12-2 1-4 1-6 0 3 3 2 7-1 8-4 1-7-2-7-6s4-6 7-5c4 1 6-1 6-4z" fill="#1593e6" /> },
  { key: "green", running: true, art: <><circle cx="12" cy="12" r="10" fill="#6cc72f" stroke="#fff" /><path d="M7 12h10c0-6-9-6-10 0 0 5 6 6 9 3" fill="none" stroke="#fff" strokeWidth="2" /><path d="M2 16C6 7 14 3 22 7" stroke="#c6ef9f" fill="none" /></> },
  { key: "note", running: true, art: <><path d="M1 1h21v21H1z" fill="#f7951d" stroke="#ffe0a0" /><path d="M5 4h13v16H5z" fill="#fff8e4" /><path d="M7 8h7M7 11h7M7 14h5" stroke="#b87c2a" /><path d="M10 16L21 4l2 2-11 12-3 1z" fill="#a0521a" /></> },
];

/* --------------------------------------------------------------- overlays */

const Monitor = styled.div`
  position: fixed;
  z-index: 3;
  left: 749px;
  top: 6px;
  display: flex;
  align-items: center;
`;

const Gauge = styled.div`
  z-index: 1;
  width: 46px;
  height: 46px;
  border: 2px solid #f5f5f5;
  border-radius: 50%;
  background: linear-gradient(#17845a 0 40%, #46ce62 40%);
  box-shadow: 0 1px 4px #666;
  color: #e9fff0;
  font: 14px/40px ${UI};
  text-align: center;
`;

const Speed = styled.div`
  display: flex;
  align-items: center;
  gap: 20px;
  width: 92px;
  height: 39px;
  margin-left: -14px;
  padding: 0 4px 0 18px;
  border: 1px solid #bbb;
  border-radius: 0 20px 20px 0;
  background: linear-gradient(#f2f2f2, #cfcfcf);
  box-shadow: 1px 2px 4px #999;
  font: 9px/15px ${UI};
`;

const BoostIcon = styled.svg`
  width: 20px;
  height: 20px;
  margin-left: -24px;
`;

const ImeBar = styled.div`
  position: fixed;
  z-index: 4;
  left: 868px;
  top: 0;
  display: flex;
  align-items: flex-start;
`;

const ImeTools = styled.div`
  display: flex;
  align-items: center;
  justify-content: space-between;
  width: 158px;
  height: 23px;
  margin: 3px 0 0 -2px;
  padding: 0 4px 0 6px;
  border: 1px solid #a9c3dc;
  background: #fff;
  color: #1a73c8;
  font: bold 15px/20px ${UI};
`;

const MENUS = ["文件(F)", "编辑(E)", "楼层(L)", "构件(N)", "绘图(D)", "修改(M)", "钢筋量(Q)", "视图(V)", "工具(T)", "云应用(Y)", "BIM应用(I)", "在线服务(S)", "帮助(H)", "版本号"];

const Main = styled.main`
  display: flex;
  flex-direction: column;
  flex: 1;
  min-width: 0;
`;

export default function App() {
  return (
    <Shell>
      <Global />
      <TitleBar>
        <AppMark />
        广联达BIM钢筋算量软件 GGJ2013 - [C:\Users\Administrator.PC-20141127NRHM\Desktop\白龙村-2016-08-25-13-27-07(2166版)_1.1.GGJ12]
        <WindowButtons>
          {["M0 6.500h10", "M0.500 3.500h7v7h-7zM3.500 3V0.500h7v7H8", "M0 0l10 10M10 0L0 10"].map((d, i) => (
            <WindowButton key={d} type="button" aria-label={["最小化", "还原", "关闭"][i]}>
              <svg width="11" height="11" viewBox="0 0 11 11" fill="none" stroke="#000"><path d={d} /></svg>
            </WindowButton>
          ))}
        </WindowButtons>
      </TitleBar>

      <MenuBar>
        {MENUS.map((m) => <MenuItem key={m} type="button">{m}</MenuItem>)}
        <Account>
          <AccountCell $width={62} $plain>
            <svg width="15" height="16" viewBox="0 0 15 16"><path d="M2 5c0-5 11-5 11 0v4c3-1 2 3 0 3v3c-1 1-2 1-3-1-1 2-3 2-4 0-2 2-3 2-4 1v-3c-2 0-3-4 0-3z" fill="#1e90e0" /><circle cx="5" cy="6" r="1.500" fill="#fff" /><circle cx="10" cy="6" r="1.500" fill="#fff" /><path d="M4 9c2 2 5 2 7 0" stroke="#fff" fill="none" /></svg>
            广小二
          </AccountCell>
          <AccountCell $width={189} $pad={29} $color="#663300">楼梯里高端平板净长是..</AccountCell>
          <AccountCell $pad={4}>
            <svg width="16" height="16" viewBox="0 0 16 16"><rect width="16" height="16" rx="2" fill="#3f8fc0" /><circle cx="8" cy="6" r="3" fill="#fff" /><path d="M3 13c0-5 10-5 10 0z" fill="#fff" /></svg>
            13907298339
            <Caret />&nbsp;&nbsp;造价豆:0&nbsp;&nbsp;
            <svg width="14" height="16" viewBox="0 0 14 16"><path d="M1 12c2-1 1-10 6-11 5 1 4 10 6 11zM5 13h4l-2 2z" fill="#1f84f0" /></svg>
            <More>»</More>
          </AccountCell>
        </Account>
      </MenuBar>

      <Row $height={30}>
        <Group $width={151}>
          <Tools items={[t("newFile"), t("open", "", true), t("save"), "|", t("undo", "", true)]} />
          <More>»</More>
        </Group>
        <Group $width={550}>
          <Tools items={[t("define", "定义"), t("sigma", "汇总计算"), t("cloud", "云检查"), off("slabTop", "平齐板顶"), t("binocular", "查找图元"), t("glasses", "查看钢筋量"), off("batch", "批量选择")]} />
          <More>»</More>
        </Group>
        <Group $grow>
          <Tools items={[t("cube", "三维", true), t("cubeTop", "俯视", true), on("orbit", "动态观察"), off("part3d", "局部三维"), "|", t("fit", "全屏"), t("zoom", "缩放", true), t("pan", "平移", true), t("screenRot", "屏幕旋转", "tight"), "|", t("floors", "选择楼层")]} />
          <More>»</More>
        </Group>
      </Row>

      <Body>
        <Sidebar>
          <SidebarTitle>
            <span>模块导航栏</span>
            <svg width="9" height="9" viewBox="0 0 9 9" fill="none" stroke="#fff"><path d="M2.500 0v5M6 0v5M2 0.500h5M0 5.500h9M4.500 5v4" /></svg>
            <svg width="9" height="9" viewBox="0 0 9 9" stroke="#fff"><path d="M1 1l7 7M8 1L1 8" /></svg>
          </SidebarTitle>
          <SidebarTab type="button">工程设置</SidebarTab>
          <SidebarTab type="button" $last>绘图输入</SidebarTab>
          <TreeTools>
            <svg width="17" height="16" viewBox="0 0 17 16" fill="none"><path d="M5 1v8M1 5h8M12 7v8M8 11h8" stroke="#000" strokeWidth="3" /><path d="M5 2v6M2 5h6M12 8v6M9 11h6" stroke="#0a9a78" /></svg>
            <svg width="17" height="16" viewBox="0 0 17 16" fill="none"><path d="M1 4h8M8 11h8" stroke="#000" strokeWidth="3" /><path d="M2 4h6M9 11h6" stroke="#0a9a78" /></svg>
          </TreeTools>
          <TreeFrame>
            <Tree />
            <ScrollBar>
              <ScrollArrow turn={0} />
              <Track $size={192} />
              <Thumb $size={250} />
              <Track $size={8} />
              <ScrollArrow turn={180} />
            </ScrollBar>
          </TreeFrame>
          <SidebarTab type="button">单构件输入</SidebarTab>
          <SidebarTab type="button" $last>报表预览</SidebarTab>
        </Sidebar>

        <Main>
          <Row $height={27}>
            <Group>
              <Grip />
              <Tools items={[off("brush", "删除"), "|", off("copy", "复制"), off("mirror", "镜像"), "|", off("move", "移动"), off("rotate", "旋转"), "|", off("extend", "延伸"), off("trim", "修剪"), "|", off("breakIt", "打断"), off("merge", "合并"), off("split", "分割"), "|", off("align", "对齐", "tight"), off("offset", "偏移"), off("stretch", "拉伸"), "|", off("grip", "设置夹点")]} />
            </Group>
          </Row>
          <Row>
            <Group>
              <Grip />
              <Combo name="楼层" value="第5层" width={58} />
              <Combo name="构件类型" value="自定义" width={69} />
              <Combo name="构件" value="自定义线" width={69} />
              <Combo name="构件名称" value="ZDYX-87" width={69} />
              <Tools items={["|", t("prop", "属性"), on("editBar", "编辑钢筋"), t("list", "构件列表"), t("pick", "拾取构件")]} />
            </Group>
            <Group $gap={71}>
              <Grip />
              <Tools items={[t("twoPt", "两点"), t("parallel", "平行"), t("ptAngle", "点角", true), t("threeAx", "三点辅轴", true), t("delAx", "删除辅轴"), t("dim", "尺寸标注", true)]} />
            </Group>
          </Row>
          <Row $height={28}>
            <Group>
              <Grip />
              <Tools items={[t("cursor", "选择", true), "|", t("lineSeg", "直线"), t("ptLen", "点加长度"), t("arc3", "三点画弧", true)]} />
              <Combo name="画法" value="" width={55} />
              <Tools items={[t("rect", "矩形"), "|", t("smart", "智能布置", "tight")]} />
            </Group>
            <Group $gap={342}>
              <Grip />
              <Unit $after={20} />
            </Group>
          </Row>

          <Stage>
            <Scene />
            <DisplayPanel>
              <PanelCaption>钢筋显示控制面板</PanelCaption>
              <PanelList>
                {["水平纵筋", "横向钢筋", "显示其它图元", "显示详细公式"].map((name) => (
                  <PanelTick key={name}><Tick type="checkbox" defaultChecked />{name}</PanelTick>
                ))}
              </PanelList>
            </DisplayPanel>
          </Stage>

          <Row $height={35}>
            <Group>
              <Grip />
              <Tools items={[t("ortho", "正交"), on("snap", "对象捕捉"), on("dyn", "动态输入")]} />
            </Group>
            <Group>
              <Grip />
              <Tools items={[t("cross", "交点"), on("perp", "垂点"), on("mid", "中点"), t("vertex", "顶点"), t("coord", "坐标")]} />
            </Group>
            <Group>
              <Grip />
              <Combo name="偏移方式" value="不偏移" width={58} />
              <Separator />
              <Unit>X=</Unit>
              <Spin name="X" value="0" width={58} />
              <Unit $after={4}>mm</Unit>
              <Unit>Y=</Unit>
              <Spin name="Y" value="0" width={58} />
              <Unit $after={2}>mm</Unit>
              <Separator />
              <TickLabel><Tick type="checkbox" />旋转</TickLabel>
              <Unit $after={2} />
              <Spin name="旋转角度" value="0.000" width={69} />
              <Unit>°</Unit>
            </Group>
          </Row>

          <Dock>
            <DockHandle>
              <svg width="11" height="11" viewBox="0 0 11 11" fill="none"><rect x="0.500" y="0.500" width="10" height="10" fill="#eee" stroke="#444" /><path d="M2 2l7 7M9 2L2 9" stroke="#222" strokeWidth="1.500" /><path d="M1 1h9" stroke="#b33" /></svg>
            </DockHandle>
            <DockContent>
              <Row $height={26}>
                <Group $grow>
                  {["first", "prev", "next", "last"].map((n) => <NavButton key={n} type="button" aria-label={n}><Icon name={n} /></NavButton>)}
                  <Separator />
                  {["up", "down"].map((n) => <NavButton key={n} type="button" aria-label={n}><Icon name={n} /></NavButton>)}
                  <Tools items={["|", off("insert", "插入"), off("delRow", "删除"), off("scale", "缩尺配筋"), t("info", "钢筋信息"), t("lib", "钢筋图库"), t("other", "其他", "tight"), t(null, "关闭"), "|"]} />
                  <Unit $dark>&nbsp;单构件钢筋总重(kg)：141.691</Unit>
                </Group>
              </Row>
              <GridFrame>
                <GridView>
                  <RebarTable />
                  <ScrollBar>
                    <ScrollArrow turn={0} />
                    <Thumb $size={18} />
                    <Track $size={100} />
                    <ScrollArrow turn={180} />
                  </ScrollBar>
                </GridView>
                <ScrollBar $horizontal>
                  <ScrollArrow turn={-90} />
                  <Thumb $size={729} />
                  <Track $size={369} />
                  <ScrollArrow turn={90} />
                </ScrollBar>
              </GridFrame>
            </DockContent>
          </Dock>
          <Row $height={2} />
        </Main>
      </Body>

      <StatusBar>
        <StatusCell $width={148}>X=7196 Y=2537</StatusCell>
        <StatusCell $width={78}>层高:2.8m</StatusCell>
        <StatusCell $width={98}>底标高:13.07m</StatusCell>
        <StatusCell $width={48}>1(1)</StatusCell>
        <StatusCell />
        <StatusCell $width={71}>110.5 FPS</StatusCell>
      </StatusBar>

      <TaskBar>
        <StartButton type="button" aria-label="开始">
          <svg width="16" height="16" viewBox="0 0 16 16" fill="#fff"><path d="M0 2.300l6.500-.9v6.100H0zM7.500 1.300L16 0v7.500H7.500zM0 8.500h6.500v6.100L0 13.700zM7.500 8.500H16V16l-8.500-1.300z" /></svg>
        </StartButton>
        <SearchBox>
          <svg width="22" height="22" viewBox="0 0 22 22"><circle cx="11" cy="11" r="9" fill="none" stroke="#fff" strokeWidth="3" /></svg>
          <SearchInput aria-label="搜索" placeholder="在这里输入你要搜索的内容" />
          <svg width="13" height="18" viewBox="0 0 13 18" fill="none" stroke="#aaa"><rect x="4.500" y="1.500" width="4" height="9" rx="1" /><path d="M1.500 8v4q0 1.500 2 1.500h6q2 0 2-1.500V8M6.500 14v3M4 17.500h5" /></svg>
        </SearchBox>
        {TASKS.map(({ key, width, art, running, front }) => (
          <TaskButton key={key} type="button" aria-label={key} $width={width} $running={running} $front={front}>
            {art ? <svg width="24" height="24" viewBox="0 0 24 24">{art}</svg> : <AppMark size={24} />}
          </TaskButton>
        ))}
        <Tray>
          <TrayItem $width={76}>30%<br />CPU使用</TrayItem>
          <TrayItem $width={24}><svg width="12" height="8" viewBox="0 0 12 8" fill="none" stroke="#fff" strokeWidth="1.500"><path d="M1 7l5-5 5 5" /></svg></TrayItem>
          <TrayItem $width={24}><svg width="16" height="12" viewBox="0 0 16 12" fill="none" stroke="#fff"><rect x="4.500" y="3.500" width="10" height="7" /><path d="M6 5h7v4H6z" fill="#fff" /><path d="M0 2h4M1 0v3h3V0M2.500 4v4H5" /></svg></TrayItem>
          <TrayItem $width={24}><svg width="14" height="14" viewBox="0 0 14 14" fill="none" stroke="#fff"><path d="M1 13C1 6 6 1 13 1M4 13c0-5 4-9 9-9M7 13c0-3 3-6 6-6" /><circle cx="11" cy="12" r="1.500" fill="#fff" /></svg></TrayItem>
          <TrayItem $width={22}><svg width="17" height="14" viewBox="0 0 17 14" fill="none" stroke="#fff"><path d="M1 5h3l4-4v12L4 9H1zM10 4q2 3 0 6M12 2q4 5 0 10M14.500 1q4 6 0 12" /></svg></TrayItem>
          <TrayItem $width={34}><svg width="23" height="14" viewBox="0 0 23 14" fill="none" stroke="#fff"><rect x="0.500" y="0.500" width="22" height="12" /><path d="M3 3.500h17M3 6.500h17" strokeDasharray="2 1" /><path d="M5 9.500h13" /></svg></TrayItem>
          <TrayItem $width={24} $large>英</TrayItem>
          <TrayItem $width={32}><SogouMark size={16} /></TrayItem>
          <TrayItem $width={76} $tall>16:57<br />2017/11/21</TrayItem>
          <TrayItem $width={52}>
            <NoticeIcon>
              <svg width="16" height="18" viewBox="0 0 16 18"><path d="M0 1h16v12H5l-3 4v-4H0z" fill="#fff" /><path d="M2 4.500h12M2 7.500h12M2 10.500h8" stroke="#222" /></svg>
              <NoticeCount>20</NoticeCount>
            </NoticeIcon>
          </TrayItem>
        </Tray>
      </TaskBar>

      <Monitor>
        <Gauge>58%</Gauge>
        <Speed>
          <svg width="7" height="26" viewBox="0 0 7 26" fill="none" strokeWidth="1.500"><path d="M3.500 9V2M1 4.500L3.500 2 6 4.500" stroke="#e2503c" /><path d="M3.500 17v7M1 21.500L3.500 24 6 21.500" stroke="#1f9a4a" /></svg>
          <span>0K/s<br />0K/s</span>
        </Speed>
        <BoostIcon viewBox="0 0 20 20"><circle cx="9" cy="11" r="8" fill="#2f7de0" /><path d="M9 7v8M5 11h8" stroke="#fff" strokeWidth="2" /><circle cx="15" cy="5" r="4" fill="#d9252a" /></BoostIcon>
      </Monitor>

      <ImeBar>
        <SogouMark size={28} />
        <ImeTools>
          英
          <svg width="12" height="14" viewBox="0 0 12 14" fill="currentColor"><circle cx="3" cy="4" r="2" /><path d="M8 6h3c0 3-1 4-3 5z" /></svg>
          <svg width="12" height="16" viewBox="0 0 12 16" fill="none" stroke="currentColor" strokeWidth="1.500"><rect x="4" y="1" width="4" height="8" rx="2" fill="currentColor" /><path d="M1 7c0 6 10 6 10 0M6 12v3M3 15h6" /></svg>
          <svg width="16" height="12" viewBox="0 0 16 12" fill="none" stroke="currentColor" strokeWidth="1.500"><rect x="1" y="1" width="14" height="10" /><path d="M3 4h10M3 6.500h10" strokeDasharray="1.500 1" /><path d="M5 9h6" /></svg>
          <svg width="17" height="16" viewBox="0 0 17 16"><circle cx="6" cy="4" r="3" fill="#a9b4cc" /><path d="M0 13c0-7 12-7 12 0z" fill="#a9b4cc" /><rect x="6.500" y="8.500" width="9" height="6" fill="#fff" stroke="#a9b4cc" /><path d="M9 10v4M11 10.500h3v3h-3" stroke="#a9b4cc" fill="none" /></svg>
          <svg width="15" height="14" viewBox="0 0 15 14" fill="currentColor"><path d="M4 1h2q1.500 2 3 0h2l4 3-2 3-1.500-1v8h-8V6L2 7 0 4z" /></svg>
          <svg width="14" height="15" viewBox="0 0 14 15" fill="currentColor"><path d="M1 12l6-6c-1-3 1-6 4-5L9 4l1 2 3-2c1 3-2 6-5 5l-5 5c-2 1-3-1-2-2z" /></svg>
        </ImeTools>
      </ImeBar>
    </Shell>
  );
}
